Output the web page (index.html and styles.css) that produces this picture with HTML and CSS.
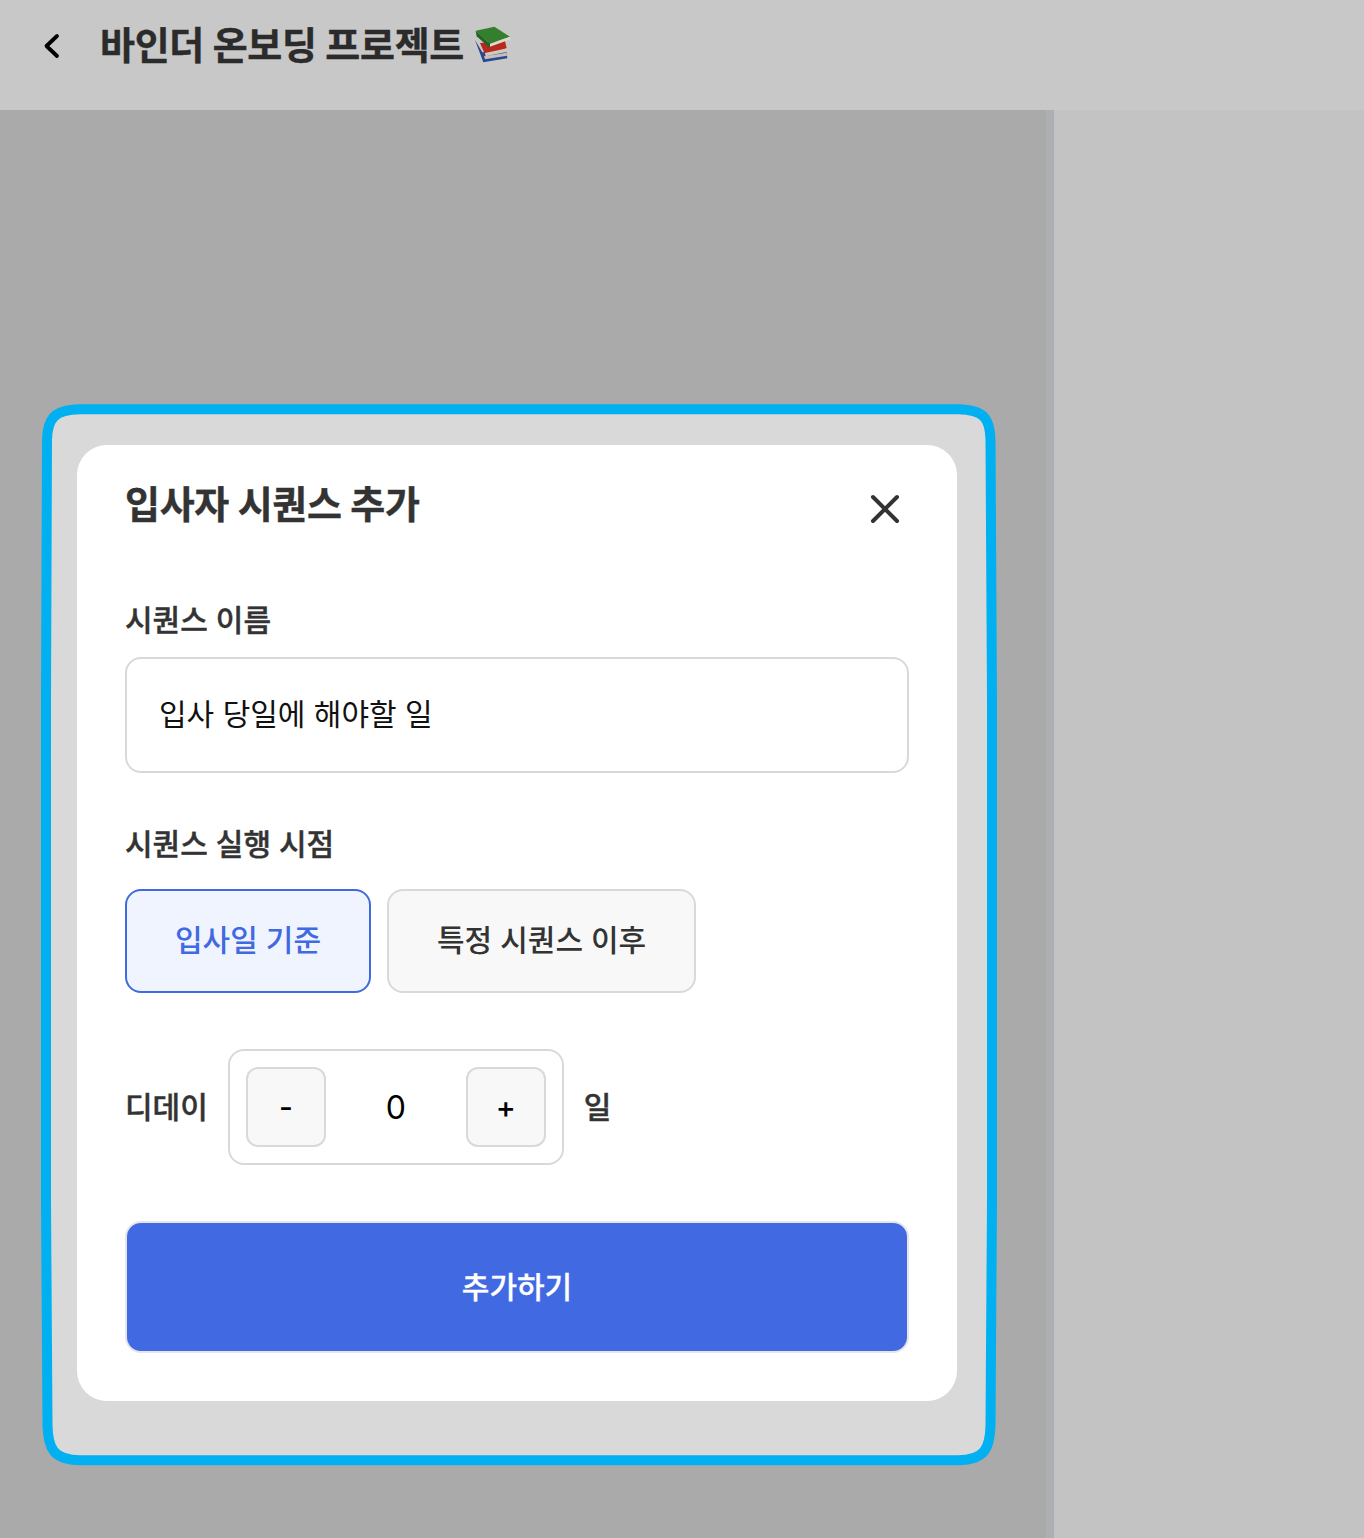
FILE: index.html
```html
<!DOCTYPE html>
<html lang="ko">
<head>
    <meta charset="UTF-8">
    <title>입사자 시퀀스 추가</title>
    <link rel="stylesheet" href="styles.css">
</head>
<body>
    <header class="topbar">
        <svg class="back-icon" width="18" height="30" viewBox="0 0 18 30"><path d="M15 5 L4.500 15 L15 25" fill="none" stroke="#000" stroke-width="3.800" stroke-linecap="round" stroke-linejoin="round"/></svg>
        <h2 class="page-title">바인더 온보딩 프로젝트</h2>
        <svg class="books-icon" width="60" height="60" viewBox="0 0 180 180">
            <path d="M30 75 L55 142 L127 130 L125 112 L52 112 Z" fill="#2b4790"/>
            <path d="M57 124 L125 113 L126 122 L60 133 Z" fill="#c4c0ba"/>
            <path d="M45 84 L120 78 L125 100 L62 122 Z" fill="#b8281c"/>
            <path d="M60 114 L127 100 L127 110 L62 124 Z" fill="#d2c8c0"/>
            <path d="M32 47 L88 35 L135 65 L75 86 Z" fill="#337f2e"/>
            <path d="M32 47 L75 86 L75 100 L35 64 Z" fill="#256324"/>
            <path d="M75 86 L135 65 L137 73 L75 95 Z" fill="#dcdacc"/>
        </svg>
    </header>

    <div class="page">
        <main class="content">
            <section class="highlight">
                <svg class="highlight-frame" width="960" height="1066" viewBox="40 402 960 1066">
                    <path d="M47 440 C47.500 420 53 409.500 80 409.300 L958 409.300 C985 409.500 990 420 990.500 440 C991 520 992 600 992 700 L992 1200 C992 1300 991 1380 990.500 1425 C990 1448 985 1460 958 1460.300 L80 1460.300 C53 1460 48 1448 47.500 1425 C47 1380 46 1300 46 1200 L46 700 C46 600 47 520 47 440 Z" fill="#d9d9d9" stroke="#00b0f0" stroke-width="10"/>
                </svg>
                <div class="modal">
                    <div class="modal-head">
                        <h1 class="modal-title">입사자 시퀀스 추가</h1>
                        <svg class="close-icon" width="30" height="30" viewBox="0 0 30 30"><path d="M3 3 L27 27 M27 3 L3 27" fill="none" stroke="#333" stroke-width="4" stroke-linecap="round"/></svg>
                    </div>

                    <label class="field-label name-label">시퀀스 이름</label>
                    <div class="text-input">입사 당일에 해야할 일</div>

                    <label class="field-label when-label">시퀀스 실행 시점</label>
                    <div class="choice-row">
                        <button class="choice choice-on">입사일 기준</button>
                        <button class="choice">특정 시퀀스 이후</button>
                    </div>

                    <div class="delay-row">
                        <span class="delay-text">디데이</span>
                        <div class="stepper">
                            <button class="step-btn">-</button>
                            <span class="step-value">0</span>
                            <button class="step-btn">+</button>
                        </div>
                        <span class="delay-text">일</span>
                    </div>

                    <button class="submit">추가하기</button>
                </div>
            </section>
        </main>
        <div class="divider"></div>
        <aside class="side"></aside>
    </div>
</body>
</html>
```

FILE: styles.css
```css
* {
    box-sizing: border-box;
    margin: 0;
    padding: 0;
}

html, body {
    height: 100%;
    overflow: hidden;
}

body {
    font-family: "Inter", "Noto Sans CJK KR", sans-serif;
    color: #333;
    display: flex;
    flex-direction: column;
}

button {
    font-family: inherit;
}

.topbar {
    height: 110px;
    background-color: #c8c8c8;
    display: flex;
    align-items: flex-start;
    padding: 31px 0 0 42px;
    flex-shrink: 0;
}

.back-icon {
    margin-right: 40px;
}

.page-title {
    font-size: 38px;
    line-height: 28px;
    font-weight: 700;
    letter-spacing: -0.3px;
    color: #2b2b2b;
    white-space: nowrap;
    -webkit-text-stroke: 0.4px #2b2b2b;
}

.books-icon {
    margin: -16px 0 0 1px;
}

.page {
    flex: 1;
    display: flex;
    min-height: 0;
}

.content {
    width: 1046px;
    background-color: #aaa;
    padding: 294px 0 0 42px;
}

.divider {
    width: 8px;
    background-color: #aeafb3;
}

.side {
    flex: 1;
    background-color: #c3c3c3;
}

/* the blue frame is slightly squircle, so it is drawn */
.highlight {
    position: relative;
    width: 953px;
    height: 1061px;
    padding: 41px 0 0 35px;
}

.highlight-frame {
    position: absolute;
    top: -2px;
    left: -2px;
}

.modal {
    position: relative;
    width: 880px;
    height: 956px;
    background-color: #fff;
    border-radius: 30px;
    padding: 0 48px;
}

.modal-head {
    display: flex;
    justify-content: space-between;
    padding-top: 36px;
    height: 132px;
}

.modal-title {
    font-size: 38px;
    line-height: 46px;
    font-weight: 700;
    letter-spacing: -0.3px;
    -webkit-text-stroke: 0.4px #333;
}

.close-icon {
    margin: 13px 9px 0 0;
}

.field-label {
    display: block;
    font-size: 30px;
    line-height: 40px;
    font-weight: 500;
    -webkit-text-stroke: 0.4px #333;
}

.name-label {
    margin-top: 23px;
    margin-bottom: 17px;
}

.text-input {
    height: 116px;
    border: 2px solid #d9d9d9;
    border-radius: 16px;
    padding: 0 32px 6px;
    display: flex;
    align-items: center;
    font-size: 30px;
    color: #111;
}

.when-label {
    margin-top: 51px;
    margin-bottom: 25px;
}

.choice-row {
    display: flex;
    gap: 16px;
}

.choice {
    height: 104px;
    padding: 0 48px 6px;
    border: 2px solid #d9d9d9;
    border-radius: 16px;
    background-color: #f8f8f8;
    font-size: 30px;
    font-weight: 500;
    color: #333;
}

.choice-on {
    border-color: #4169e1;
    background-color: #f0f4ff;
    color: #4169e1;
}

.delay-row {
    display: flex;
    align-items: center;
    margin-top: 56px;
    gap: 20px;
}

.delay-text {
    font-size: 30px;
    font-weight: 500;
    padding-bottom: 4px;
    -webkit-text-stroke: 0.4px #333;
}

.stepper {
    width: 336px;
    height: 116px;
    border: 2px solid #d9d9d9;
    border-radius: 16px;
    padding: 0 16px;
    display: flex;
    align-items: center;
    justify-content: space-between;
}

.step-btn {
    width: 80px;
    height: 80px;
    border: 2px solid #d9d9d9;
    border-radius: 12px;
    background-color: #f8f8f8;
    font-size: 30px;
    font-weight: 500;
    color: #000;
}

.step-value {
    font-size: 32px;
    color: #000;
}

.submit {
    display: block;
    width: 100%;
    height: 132px;
    margin-top: 56px;
    padding-bottom: 4px;
    border: 2px solid #e5e5ea;
    border-radius: 16px;
    background-color: #4169e1;
    color: #fff;
    font-size: 30px;
    font-weight: 500;
    -webkit-text-stroke: 0.3px #fff;
}
```
